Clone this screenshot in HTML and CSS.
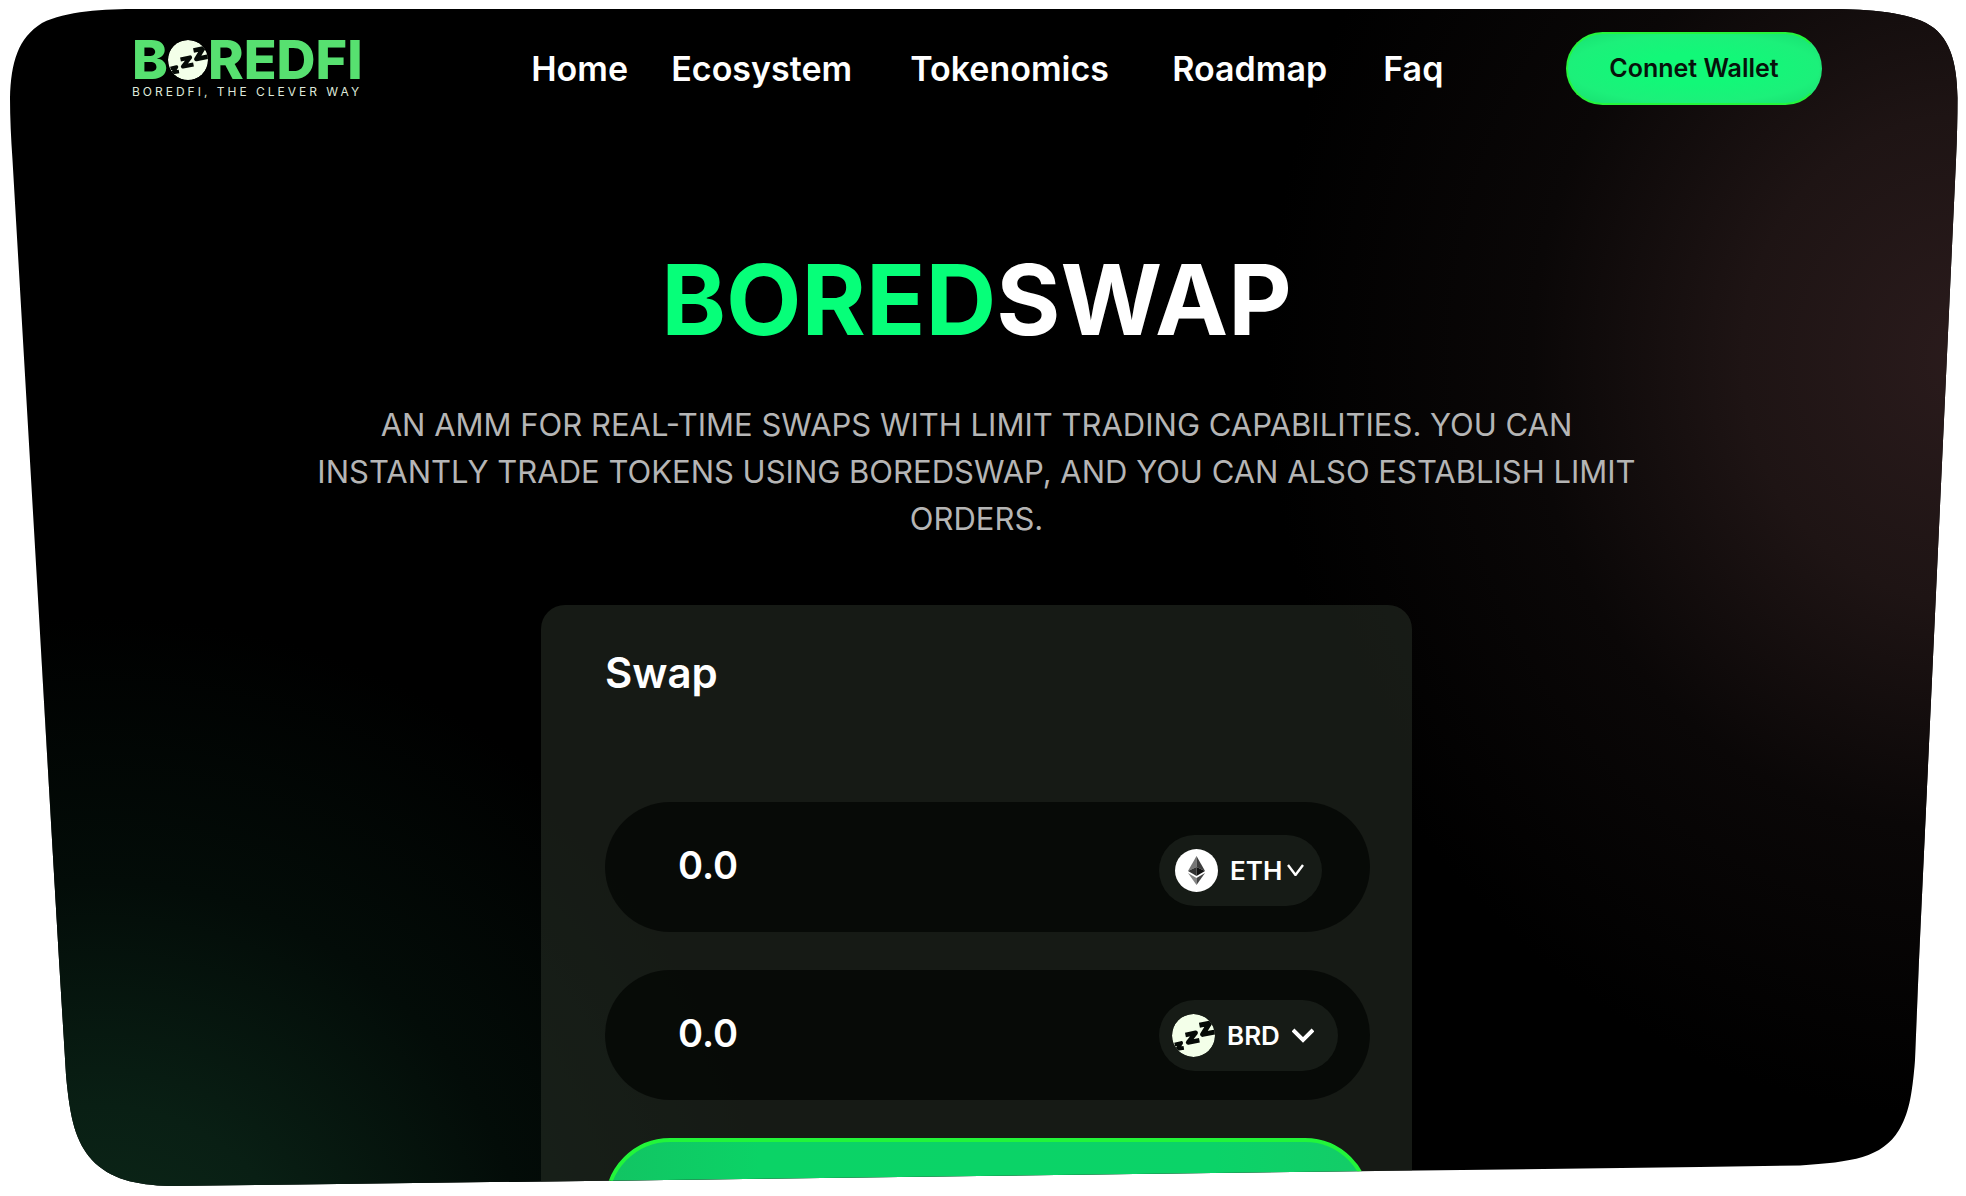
FILE: index.html
```html
<!DOCTYPE html>
<html lang="en">
<head>
<meta charset="utf-8">
<meta name="viewport" content="width=device-width, initial-scale=1">
<title>BoredSwap</title>
<link rel="stylesheet" href="styles.css">
</head>
<body>
<svg class="defs" width="0" height="0" aria-hidden="true">
  <defs>
    <clipPath id="hero-shape" clipPathUnits="objectBoundingBox">
      <path transform="scale(0.000508647 0.00083612)" d="M140 9H1825C1862 9 1902 11 1926 23C1949 35 1957 60 1957.500 98C1957.500 118 1957 138 1956 160L1919 960L1915 1060C1912 1098 1908 1115 1899 1130C1882 1158 1852 1162 1800 1165.500L1700 1167L300 1184.500L170 1186C135 1185 110 1179 92 1160C76 1142 70 1120 66 1075L59 960L12.500 160C11 138 10 118 10 98C11 62 18 38 42 23C66 11 103 9 140 9Z"/>
    </clipPath>
    <clipPath id="coin"><circle cx="20" cy="20" r="20"/></clipPath>
    <symbol id="zzz" viewBox="0 0 40 40">
      <g clip-path="url(#coin)" stroke-linejoin="round">
        <circle cx="20" cy="20" r="20" fill="#f3ffe9"/>
        <path d="M2.500 28.500L8.500 27L5 32.500L11 31.500" fill="none" stroke="#050a06" stroke-width="3.500"/>
        <path d="M12.500 19.500L22 17.500L15 26.500L25.500 24.500" fill="none" stroke="#050a06" stroke-width="4.200"/>
        <path d="M25.500 10.500L35 8.500L28.500 19L41 16.500" fill="none" stroke="#050a06" stroke-width="4.600"/>
      </g>
    </symbol>
  </defs>
</svg>
<div class="hero">
  <header class="header">
    <a class="logo" href="#home" aria-label="BoredFi">
      <span class="logo-name">B<svg class="logo-coin" aria-hidden="true"><use href="#zzz"/></svg>REDFI</span>
      <span class="logo-tagline">BOREDFI, THE CLEVER WAY</span>
    </a>
    <nav class="nav">
      <a href="#home">Home</a>
      <a href="#ecosystem">Ecosystem</a>
      <a href="#tokenomics">Tokenomics</a>
      <a href="#roadmap">Roadmap</a>
      <a href="#faq">Faq</a>
    </nav>
    <button class="connect" type="button">Connet Wallet</button>
  </header>
  <main class="main">
    <h1 class="title"><span class="title-accent">BORED</span>SWAP</h1>
    <p class="intro">AN AMM FOR REAL-TIME SWAPS WITH LIMIT TRADING CAPABILITIES. YOU CAN INSTANTLY TRADE TOKENS USING BOREDSWAP, AND YOU CAN ALSO ESTABLISH LIMIT ORDERS.</p>
    <form class="card">
      <h2 class="card-title">Swap</h2>
      <div class="fields">
        <div class="field">
          <input class="amount" type="text" inputmode="decimal" value="0.0" aria-label="Amount to pay">
          <label class="token token-eth">
            <svg class="token-icon" viewBox="0 0 43 43" aria-hidden="true">
              <circle cx="21.500" cy="21.500" r="21.500" fill="#fff"/>
              <path d="M21.500 7L13 22L21.500 18Z" fill="#777"/>
              <path d="M21.500 7L30 22L21.500 18Z" fill="#3d3d3d"/>
              <path d="M13 22L21.500 18V27Z" fill="#333"/>
              <path d="M30 22L21.500 18V27Z" fill="#111"/>
              <path d="M13 24L21.500 29V36Z" fill="#858585"/>
              <path d="M30 24L21.500 29V36Z" fill="#444"/>
            </svg>
            <select class="token-select" aria-label="Token to pay"><option>ETH</option></select>
            <svg class="chevron" viewBox="0 0 17 12" aria-hidden="true"><path d="M1 1L8.500 11L16 1" fill="none" stroke="#fff" stroke-width="2.400"/></svg>
          </label>
        </div>
        <div class="field">
          <input class="amount" type="text" inputmode="decimal" value="0.0" aria-label="Amount to receive">
          <label class="token token-brd">
            <svg class="token-icon" aria-hidden="true"><use href="#zzz"/></svg>
            <select class="token-select" aria-label="Token to receive"><option>BRD</option></select>
            <svg class="chevron" viewBox="0 0 22 15" aria-hidden="true"><path d="M1 2L11 12L21 2" fill="none" stroke="#fff" stroke-width="4"/></svg>
          </label>
        </div>
        <button class="submit" type="button" aria-label="Swap"></button>
      </div>
    </form>
  </main>
</div>
</body>
</html>
```
FILE: styles.css
```css
* { box-sizing: border-box; }

body {
  margin: 0;
  background: #fff;
  color: #fff;
  font-family: Inter, "Liberation Sans", sans-serif;
}

.defs { position: absolute; }

.hero {
  height: 100vh;
  overflow: hidden;
  clip-path: url(#hero-shape);
  background:
    radial-gradient(ellipse 700px 760px at 100% 30%, #2a1b1c 0%, #1e1414 32%, #0a0707 62%, transparent 100%),
    radial-gradient(ellipse 700px 700px at 5% 110%, #0d2a1a 0%, #091f14 30%, #030c08 62%, transparent 100%),
    #000;
}

.header {
  display: flex;
  align-items: center;
  justify-content: space-between;
  padding: 32px 144px 0 132px;
}

.logo {
  display: flex;
  flex-direction: column;
  gap: 6px;
  text-decoration: none;
}

.logo-name {
  display: flex;
  align-items: center;
  color: #57e070;
  font-size: 54px;
  font-weight: 800;
  line-height: 40px;
}

.logo-coin {
  width: 40px;
  height: 40px;
}

.logo-tagline {
  color: #dfe8da;
  font-size: 12px;
  line-height: 12px;
  letter-spacing: 3px;
}

.nav {
  display: grid;
  grid-template-columns: 140px 239px 262px 211px auto;
  padding-left: 46px;
}

.nav a {
  color: #fff;
  font-size: 34px;
  font-weight: 600;
  line-height: 40px;
  text-decoration: none;
}

.connect {
  width: 256px;
  height: 73px;
  padding: 0 0 2px;
  border: 2px solid #24f53c;
  border-right-color: #20e978;
  border-radius: 37px;
  background: radial-gradient(ellipse at 50% 50%, #12f878 30%, #1cf07a 70%, #18dd70 100%);
  color: #07120b;
  font: inherit;
  font-size: 25px;
  font-weight: 600;
}

.main {
  display: flex;
  flex-direction: column;
  align-items: center;
  padding: 135px 13px 0 0;
}

.title {
  margin: 0;
  font-size: 98px;
  font-weight: 700;
  line-height: 120px;
}

.title-accent { color: #06ff79; }

.intro {
  max-width: 1340px;
  margin: 41px 0 63px;
  color: #b5b5b5;
  font-size: 31px;
  font-weight: 400;
  line-height: 47px;
  text-align: center;
}

.card {
  width: 100%;
  max-width: 871px;
  padding: 44px 42px 64px 64px;
  border-radius: 24px;
  background: rgba(44, 52, 42, 0.5);
}

.card-title {
  margin: 0 0 105px;
  font-size: 42px;
  font-weight: 600;
  line-height: 48px;
}

.fields {
  display: grid;
  gap: 38px;
}

.field {
  display: grid;
  grid-template-columns: 1fr 211px;
  align-items: center;
  height: 130px;
  border-radius: 65px;
  background: rgba(0, 3, 0, 0.66);
}

.amount {
  width: 100%;
  padding: 0 0 4px 73px;
  border: 0;
  background: none;
  color: #fff;
  font: inherit;
  font-size: 38px;
  font-weight: 600;
}

.token {
  display: flex;
  align-items: center;
  justify-self: start;
  height: 71px;
  border-radius: 36px;
  background: #161b16;
}

.token-eth {
  width: 163px;
  margin-top: 6px;
  padding-left: 16px;
}

.token-brd {
  width: 179px;
  padding-left: 13px;
}

.token-icon {
  flex: none;
  width: 43px;
  height: 43px;
}

.token-select {
  appearance: none;
  margin-left: 12px;
  padding: 0;
  border: 0;
  background: none;
  color: #fff;
  font: inherit;
  font-size: 26px;
  font-weight: 600;
}

.chevron { flex: none; }

.token-eth .chevron {
  width: 17px;
  height: 12px;
  margin-left: 4px;
}

.token-brd .chevron {
  width: 22px;
  height: 15px;
  margin-left: 12px;
}

.submit {
  height: 130px;
  border: 4px solid #22f53a;
  border-radius: 65px;
  background: linear-gradient(90deg, #12c463, #0bd366 20%, #0bd368 80%, #14cc68);
}
```
